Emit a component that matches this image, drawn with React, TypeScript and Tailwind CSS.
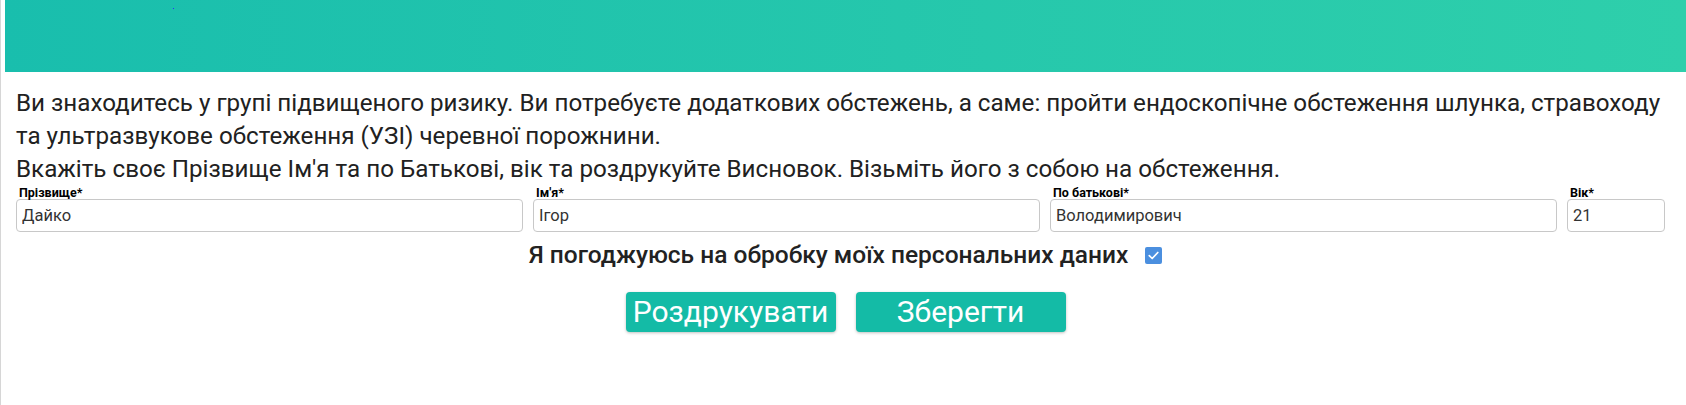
import React, { useState } from 'react';

const fields = [
  { label: 'Прізвище*', value: 'Дайко', wide: true },
  { label: "Ім'я*", value: 'Ігор', wide: true },
  { label: 'По батькові*', value: 'Володимирович', wide: true },
  { label: 'Вік*', value: '21', wide: false },
];

export default function App() {
  const [agreed, setAgreed] = useState(true);

  return (
    <div
      className="min-h-[405px] border-l border-[#d6d6d6] pl-[4px] bg-white text-[#212121]"
      style={{ fontFamily: 'Roboto, "Noto Sans", sans-serif' }}
    >
      <div className="relative h-[72px] bg-gradient-to-r from-[#19bead] to-[#2ecfab]">
        <span className="absolute left-[168px] top-[8px] w-px h-px bg-[#2b2bff]"></span>
      </div>

      <div className="pl-[11px] pr-[21px] pt-[15px]">
        <p className="text-[24.2px] leading-[33px]">
          Ви знаходитесь у групі підвищеного ризику. Ви потребуєте додаткових обстежень, а саме: пройти ендоскопічне
          обстеження шлунка, стравоходу та ультразвукове обстеження (УЗІ) черевної порожнини.
        </p>
        <p className="text-[24.2px] leading-[33px]">
          Вкажіть своє Прізвище Ім'я та по Батькові, вік та роздрукуйте Висновок. Візьміть його з собою на обстеження.
        </p>

        <div className="flex gap-[10px]">
          {fields.map((f) => (
            <div key={f.label} className={f.wide ? 'flex-1 min-w-0' : 'w-[98px]'}>
              <div className="pl-[3px] text-[12.5px] leading-[13px] font-bold text-black">{f.label}</div>
              <input
                defaultValue={f.value}
                className="block w-full h-[33px] px-[5px] rounded-[4px] border border-[#c8c8c8] text-[16.5px] text-[#333] outline-none"
              />
            </div>
          ))}
        </div>
      </div>

      <div className="mt-[7px] h-[33px] flex items-center justify-center gap-[17px]">
        <span className="text-[24.5px] font-medium text-[#222]">Я погоджуюсь на обробку моїх персональних даних</span>
        <button
          onClick={() => setAgreed(!agreed)}
          className={
            agreed
              ? 'w-[17px] h-[17px] rounded-[2px] bg-[#4b8fdf] flex items-center justify-center'
              : 'w-[17px] h-[17px] rounded-[2px] border border-[#767676] bg-white'
          }
        >
          {agreed && (
            <svg viewBox="0 0 16 16" className="w-[15px] h-[15px]">
              <path d="M3.5 8.2 L6.6 11.2 L12.6 4.8" fill="none" stroke="white" strokeWidth="1.8" strokeLinecap="round" strokeLinejoin="round" />
            </svg>
          )}
        </button>
      </div>

      <div className="mt-[20px] flex justify-center gap-[20px]">
        <button className="w-[210px] h-[40px] rounded-[4px] bg-[#14bba6] text-white text-[30px] leading-[40px] shadow-[0_1px_3px_rgba(0,0,0,0.25)]">
          Роздрукувати
        </button>
        <button className="w-[210px] h-[40px] rounded-[4px] bg-[#14bba6] text-white text-[30px] leading-[40px] shadow-[0_1px_3px_rgba(0,0,0,0.25)]">
          Зберегти
        </button>
      </div>
    </div>
  );
}
